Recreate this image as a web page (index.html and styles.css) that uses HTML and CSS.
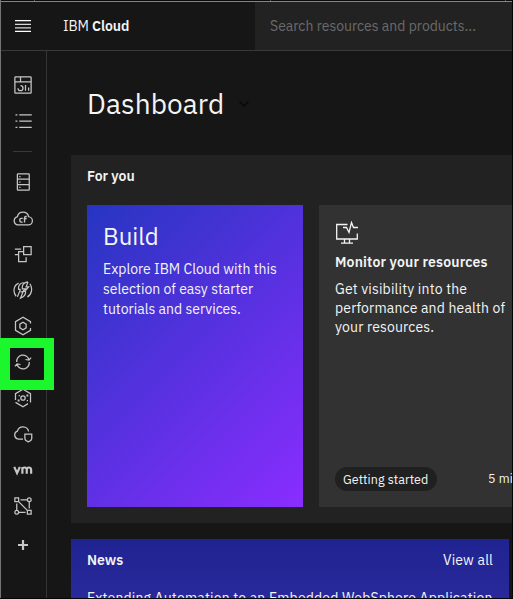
FILE: index.html
```
<!DOCTYPE html>
<html lang="en">
<head>
<meta charset="utf-8">
<title>IBM Cloud</title>
<link rel="stylesheet" href="styles.css">
</head>
<body>
<div class="window">
  <div class="tabs"><i></i><i></i><i></i></div>
  <header class="header">
    <svg class="menu" viewBox="0 0 16 12"><path class="bright" d="M0 .5h16M0 11.5h16"/><path d="M0 4.300h16M0 7.800h16"/></svg>
    <div class="brand">IBM <b>Cloud</b></div>
    <div class="search">Search resources and products...</div>
  </header>
  <div class="body">
    <nav class="rail">
      <svg class="icon" viewBox="0 0 32 32"><rect x="3" y="3" width="26" height="26" rx="1"/><path d="M3 11h26M12 3v8M25 25v-5M20 25v-9M8 21a4 4 0 0 0 8 0a4 4 0 0 0-4-4"/></svg>
      <svg class="icon" viewBox="0 0 32 32"><path d="M10 6h20M10 16h20M10 26h20M4 6h3M4 16h3M4 26h3"/></svg>
      <hr>
      <svg class="icon" viewBox="0 0 32 32"><rect x="7" y="3" width="19" height="26" rx="1"/><path d="M7 11.500h19M7 20h19M10 7.500h2M10 16h2M10 24.500h2"/></svg>
      <svg class="icon" viewBox="0 0 32 32"><path d="M8 27h16a6.500 6.500 0 0 0 1-13a9.200 9.200 0 0 0-18 0A6.600 6.600 0 0 0 8 27z"/><path class="cf" d="M15.500 16.500H13q-2 0-2 2v2q0 2 2 2h2.500M18.500 23v-7q0-2.500 2-2.500H22M17 17h5"/></svg>
      <svg class="icon" viewBox="0 0 32 32"><path d="M17 4h12v13H17zM3 8h10M3 17h6M17 12H9v16h12v-7"/></svg>
      <svg class="icon" viewBox="0 0 32 32"><path d="M9 5C0 9 0 20 5 26M27 6c5 7 3 17-4 21M17 4C11 5 8 9 9 15h3M12 15 7 27M24 3c-7 1-10 5-9 11h5l-4 4h4c1 6-3 9-8 11l4-10h-4M24 3l-3 8h4L20 17"/></svg>
      <svg class="icon" viewBox="0 0 32 32"><path d="M28 12V9L16 2 4 9v14l12 7 12-7v-4"/><path d="m16 10 5 3v6l-5 3-5-3v-6z"/></svg>
      <svg class="icon" viewBox="0 0 32 32"><path d="M6 16a10 10 0 0 1 19.500-4M26 16a10 10 0 0 1-19.500 4M29 9l-3.500 4-5.500-1M3 23l3.500-4 5.500 1"/></svg>
      <svg class="icon" viewBox="0 0 32 32"><path d="M4 19V9l12-7 12 7v14M4 23l12 7 8-5"/><circle cx="16" cy="16" r="3.500"/><path d="M22.500 11.500h1v1h-1zM8.500 19.500h1v1h-1zM22 20h2M9 12h2"/></svg>
      <svg class="icon" viewBox="0 0 32 32"><path d="M16 24H8a6.500 6.500 0 0 1-1-12.500A9.200 9.200 0 0 1 25 12M19 16h11v7q0 3-5.500 5.500Q19 26 19 23z"/></svg>
      <svg class="icon heavy" viewBox="0 0 32 32"><path d="m2 11 4.500 10L11 11M15 22V11M15 16q0-4 3.500-4t3.500 4v6M22 16q0-4 3.500-4t3.500 4v6"/></svg>
      <svg class="icon" viewBox="0 0 32 32"><path d="M3 3h6v6H3zM23 23h6v6h-6zM9 9l14 14M12 6h11M6 12v11M9 26h11M26 9v11"/><circle cx="26" cy="6" r="3"/><circle cx="6" cy="26" r="3"/></svg>
      <svg class="icon plus heavy" viewBox="0 0 32 32"><path d="M16 8v16M8 16h16"/></svg>
    </nav>
    <main class="main">
      <h1>Dashboard<svg class="chevron" viewBox="0 0 10 6"><path d="m.5.5 4.500 4.500L9.500.5"/></svg></h1>
      <section class="panel">
        <h2>For you</h2>
        <div class="cards">
          <article class="card build">
            <h3>Build</h3>
            <p>Explore IBM Cloud with this<br>selection of easy starter<br>tutorials and services.</p>
          </article>
          <article class="card monitor">
            <svg class="screen" viewBox="0 0 24 24"><path d="M12.500 3.500H1.700v14.500h20.600v-5.500M9.500 18v4M14.500 18v4M6 22.200h12M8 6.500h3.500l2.500 5 2.500-10 2 5H23"/></svg>
            <h4>Monitor your resources</h4>
            <p>Get visibility into the<br>performance and health of<br>your resources.</p>
            <footer><span class="tag">Getting started</span><span class="time">5 min</span></footer>
          </article>
        </div>
      </section>
      <section class="news">
        <div class="newshead"><b>News</b><span class="view">View all</span></div>
        <p>Extending Automation to an Embedded WebSphere Application</p>
      </section>
    </main>
  </div>
</div>
<div class="highlight"></div>
</body>
</html>
```
FILE: styles.css
```
* { box-sizing: border-box; margin: 0; padding: 0; }
body { width: 513px; height: 599px; overflow: hidden; background: #050505; color: #f4f4f4; font: 14px/20px "IBM Plex Sans", Roboto, sans-serif; white-space: nowrap; }
svg { display: block; fill: none; flex: none; }
.window { width: 512px; height: 598px; overflow: hidden; border-left: 1px solid #747474; background: #161616; }
.tabs { height: 2px; background: #0a0a0a; border-bottom: 1px solid #858585; display: flex; justify-content: space-between; padding: 0 6px 0 33px; }
.tabs i { width: 1px; height: 1px; background: #555; }
.header { height: 49px; display: flex; align-items: center; border-bottom: 1px solid #393939; }
.menu { width: 16px; height: 12px; margin-left: 14px; stroke: #d8d8d8; stroke-width: 1.3; }
.bright { stroke: #fff; }
.brand { width: 192px; margin-left: 32px; letter-spacing: -.08px; }
.brand b { font-weight: 600; }
.search { flex: 1; height: 48px; padding-left: 15px; background: #222; color: #6b6b6b; line-height: 48px; overflow: hidden; }
.body { display: flex; height: 547px; }
.rail { width: 46px; border-right: 1px solid #363636; display: flex; flex-direction: column; align-items: center; gap: 16px; padding: 24px 1px 0 0; flex: none; }
.icon { width: 20px; height: 20px; stroke: #c6c6c6; stroke-width: 2; }
.cf { stroke-width: 2.200; }
.heavy { stroke-width: 3.500; }
.plus { margin-top: 3px; }
.rail hr { width: 19px; height: 1px; border: 0; background: #393939; margin: 4px 2px 4px 0; }
.main { flex: none; width: 465px; padding: 33px 0 0 24px; overflow: hidden; }
h1 { height: 40px; display: flex; align-items: center; padding-left: 16px; gap: 15px; font-size: 28px; font-weight: 400; line-height: 40px; letter-spacing: .1px; }
.chevron { width: 10px; height: 6px; stroke: #060606; stroke-width: 1.2; }
.panel { height: 368px; margin-top: 31px; padding: 11px 16px 0; background: #222; }
h2 { font-size: 14px; font-weight: 600; line-height: 20px; }
.cards { display: flex; gap: 16px; margin-top: 19px; }
.card { flex: none; width: 216px; height: 302px; padding: 16px; }
.build { padding-top: 15px; background: linear-gradient(135deg, #2635c1, #8a2dff); }
h3 { font-size: 24px; font-weight: 400; line-height: 32px; margin-bottom: 7px; }
.monitor { background: #323232; display: flex; flex-direction: column; line-height: 19px; letter-spacing: .16px; }
.screen { width: 24px; height: 24px; stroke: #f4f4f4; stroke-width: 1.300; }
h4 { font-size: 14px; font-weight: 600; line-height: 20px; margin: 7px 0 8px; }
footer { display: flex; justify-content: space-between; align-items: center; margin-top: auto; font-size: 12.5px; width: 184px; }
.tag { height: 24px; width: 102px; border-radius: 12px; background: #202020; padding: 0 8px; line-height: 25px; letter-spacing: .08px; }
.time { width: 31px; margin-top: -2px; }
.news { width: 438px; height: 100px; margin-top: 16px; padding: 11px 16px; background: linear-gradient(#1f2390, #29299c 60px); letter-spacing: .16px; }
.newshead { display: flex; justify-content: space-between; height: 20px; }
.newshead b { font-weight: 600; letter-spacing: 0; }
.news p { margin-top: 18px; }
.highlight { position: absolute; left: 0; top: 338px; width: 54px; height: 52px; border: 10px solid #1bf72c; }
```
